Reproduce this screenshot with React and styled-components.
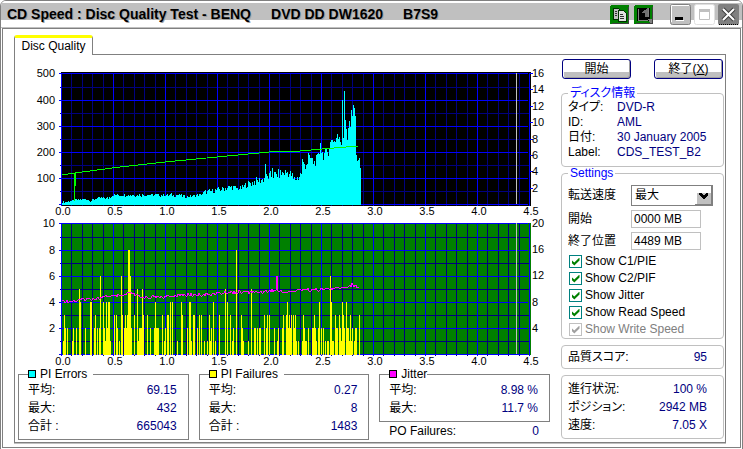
import { useState } from "react";
import styled, { createGlobalStyle } from "styled-components";

const GlobalStyle = createGlobalStyle`
  * {
    box-sizing: border-box;
  }
  body {
    margin: 0;
    background: #fff;
    color: #000;
    font: 12px/15px "Liberation Sans", "Noto Sans CJK JP", sans-serif;
    font-feature-settings: "palt";
  }
  button, input, select {
    font: inherit;
    color: inherit;
  }
`;

const Window = styled.div`
  display: flex;
  flex-direction: column;
  min-height: 100vh;
  border: 1px solid #808080;
  border-radius: 6px 6px 0 0;
  overflow: hidden;
`;

const TitleBar = styled.header`
  display: flex;
  align-items: center;
  height: 27px;
  padding: 0 3px 0 6px;
  background: linear-gradient(
    #fff 2px,
    #c0c0c0 2px 19px,
    #fff 19px 26px,
    #c0c0c0 26px
  );
`;

const Title = styled.h1`
  display: flex;
  flex: 1;
  gap: 20px;
  margin: 0;
  font-size: 14px;
  font-weight: bold;
  text-shadow: 1px 1px 0 #a0a0a0;
  white-space: nowrap;
`;

const TitleButtons = styled.div`
  display: flex;
  align-items: center;
  gap: 3px;
  margin-left: ${(props) => (props.$far ? "16px" : 0)};
`;

const IconButton = styled.button`
  width: 21px;
  height: 21px;
  padding: 0;
  border: none;
  background: none;

  svg {
    display: block;
  }
`;

const Body = styled.main`
  display: flex;
  flex-direction: column;
  flex: 1;
  margin: 0 1px 1px;
  padding: 6px 14px 4px 11px;
  border: 1px solid #808080;
`;

const Tab = styled.button`
  align-self: flex-start;
  width: 79px;
  height: 20px;
  margin-bottom: -1px;
  padding: 0;
  border: 1px solid #808080;
  border-top: 3px solid #ff0;
  border-bottom: none;
  border-radius: 3px 3px 0 0;
  background: #fff;
  z-index: 1;
`;

const Panel = styled.section`
  display: flex;
  align-items: flex-start;
  flex: 1;
  gap: 11px;
  padding: 0 1px 2px 3px;
  border: 1px solid #808080;
  box-shadow: 0 1px 0 #c0c0c0;
`;

const Charts = styled.div`
  flex: 1;
  min-width: 0;
  padding-top: 11px;
`;

const ChartSvg = styled.svg`
  display: block;
  width: 100%;
  height: auto;
  overflow: visible;
  font-size: 11px;
`;

const Stats = styled.div`
  display: grid;
  grid-template-columns: repeat(3, 1fr);
  gap: 10px;
  margin-top: 1px;
`;

const StatBox = styled.fieldset`
  min-width: 0;
  margin: 0;
  padding: 0 11px ${(props) => (props.$tight ? 4 : 2)}px 9px;
  border: 1px solid #808080;
`;

const StatLegend = styled.legend`
  display: flex;
  align-items: center;
  gap: 4px;
  padding: 0 ${(props) => (props.$tight ? 0 : "6px")} 0 0;
  line-height: 14px;
`;

const Swatch = styled.span`
  width: 8px;
  height: 8px;
  border: 1px solid #000;
  background: ${(props) => props.$color};
`;

const Rows = styled.dl`
  margin: 0;
`;

const Row = styled.div`
  display: flex;
  justify-content: space-between;
  padding: ${(props) => (props.$loose ? "0 11px 0 10px" : 0)};
  line-height: 18px;

  dd {
    margin: 0;
    color: #000080;
  }
`;

const Side = styled.aside`
  width: 163px;
  padding-top: 4px;
`;

const Actions = styled.div`
  display: flex;
  justify-content: space-between;
  margin-bottom: 8px;
  padding: 0 1px;
`;

const ActionButton = styled.button`
  width: 69px;
  height: 20px;
  padding: 0;
  border: 1px solid #000080;
  border-radius: 3px;
  background: linear-gradient(#fff 12px, #c0c0c0 12px);
  box-shadow: inset 1px 0 #fff, inset -1px -1px #a0a0a0;
  line-height: 16px;
`;

const Group = styled.fieldset`
  min-width: 0;
  margin: 0;
  padding: ${(props) => (props.$form ? "6px 6px 0" : "1px 6px 6px")};
  border: 1px solid #c0c0c0;
  border-radius: 4px;

  legend {
    padding: 0 2px;
    color: #0000ff;
    line-height: 12px;
  }
`;

const InfoRow = styled.div`
  display: grid;
  grid-template-columns: 49px 1fr;
  white-space: nowrap;

  dd {
    margin: 0;
    color: #000080;
  }
`;

const Fields = styled.div`
  display: grid;
  grid-template-columns: 63px 1fr;
  align-items: center;
  row-gap: 4px;
  margin-bottom: 3px;
`;

const SelectBox = styled.div`
  display: grid;
  width: 82px;

  > * {
    grid-area: 1 / 1;
  }
`;

const Select = styled.select`
  appearance: none;
  height: 21px;
  padding: 0 18px 0 3px;
  border: 1px solid #808080;
  border-radius: 0;
  background: #fff;
`;

const Arrow = styled.svg`
  justify-self: end;
  align-self: center;
  margin-right: 1px;
  pointer-events: none;
`;

const TextInput = styled.input`
  width: 70px;
  height: 18px;
  padding: 0 2px;
  border: 1px solid #c0c0c0;
`;

const CheckLabel = styled.label`
  display: flex;
  align-items: center;
  gap: 3px;
  height: 17px;
  padding-left: 1px;
  color: ${(props) => (props.$off ? "#808080" : "#000")};
`;

const Checkbox = styled.input`
  display: grid;
  place-content: center;
  appearance: none;
  width: 13px;
  height: 13px;
  margin: 0;
  border: 1px solid #008080;
  color: #008000;

  &:checked::before {
    content: "";
    width: 8px;
    height: 8px;
    background: currentColor;
    clip-path: polygon(0 30%, 35% 62%, 100% 0, 100% 38%, 35% 100%, 0 66%);
  }

  &:disabled {
    border-color: #c0c0c0;
    color: #a0a0a0;
  }
`;

const Summary = styled.dl`
  margin: 6px 0 0;
  padding: ${(props) => props.$pad}px 16px ${(props) => props.$pad}px 6px;
  border: 1px solid #c0c0c0;
  border-radius: 4px;
`;

// Plot area, in chart units
const LEFT = 43;
const TOP = 7;
const BOTTOM = 138;
const RIGHT = 512;

// [x, height] of the PI error curve
const PIE_PROFILE = [
  [0, 3], [9, 4], [14, 5], [24, 6], [28, 4], [36, 7], [46, 7], [50, 10],
  [60, 10], [90, 10], [118, 10], [123, 8], [138, 10], [142, 13], [155, 15],
  [168, 18], [178, 16], [185, 21], [195, 24], [201, 26], [208, 29],
  [218, 31], [225, 33], [230, 29], [231, 25], [236, 28], [239, 32],
  [240, 42], [243, 40], [248, 47], [252, 42], [256, 48], [258, 56],
  [261, 50], [266, 54], [268, 62], [270, 66], [272, 64], [275, 68], [279, 62],
];
const PIE_SPIKES = { 203: 41, 210: 37, 240: 46, 246: 52, 258: 62, 275: 71 };
// last columns, one value per pixel
const PIE_TAIL = [105, 67, 114, 85, 76, 65, 77, 84, 78, 95, 89, 100, 97, 89, 50, 44, 45, 47, 37];
const TAIL_START = 280;

// [x, y] of the jitter curve
const JITTER_PROFILE = [
  [0, 85], [12, 85], [22, 83], [40, 82], [46, 80], [60, 80], [68, 77],
  [78, 81], [100, 81], [120, 79], [150, 78], [170, 76], [200, 76],
  [214, 74], [220, 76], [228, 76], [240, 73], [255, 74], [262, 73],
  [280, 72], [290, 69], [297, 71],
];
const JITTER_SPIKE = 215;

const PIF = [
  [1, 1], [2, 3], [3, 2], [5, 2], [10, 1], [11, 2], [14, 2], [17, 5], [18, 4],
  [23, 2], [28, 4], [29, 4], [32, 2], [33, 3], [35, 2], [37, 2], [38, 6],
  [41, 4], [42, 2], [43, 1], [44, 4], [45, 2], [46, 4], [47, 4], [48, 1],
  [52, 3], [54, 3], [55, 2], [57, 1], [59, 6], [60, 3], [62, 2], [63, 3],
  [64, 2], [65, 3], [66, 8], [67, 8], [68, 6], [69, 2], [72, 3], [75, 5],
  [76, 1], [77, 2], [78, 2], [79, 2], [80, 5], [81, 3], [85, 3], [88, 2],
  [92, 2], [93, 4], [94, 2], [95, 2], [96, 2], [100, 3], [102, 1], [103, 2],
  [105, 3], [106, 3], [108, 4], [110, 4], [115, 1], [119, 4], [120, 3],
  [125, 2], [127, 4], [128, 4], [129, 1], [131, 3], [132, 3], [135, 2],
  [137, 3], [139, 3], [142, 1], [145, 1], [147, 3], [148, 1], [149, 2],
  [151, 4], [153, 1], [157, 3], [163, 5], [165, 4], [168, 3], [170, 1],
  [171, 2], [174, 8], [179, 3], [180, 2], [181, 1], [186, 1], [189, 5],
  [192, 2], [193, 2], [195, 2], [197, 2], [198, 2], [202, 3], [204, 2],
  [205, 3], [207, 3], [212, 2], [215, 1], [216, 2], [220, 2], [221, 3],
  [224, 3], [225, 4], [226, 2], [227, 3], [228, 2], [229, 3], [231, 3],
  [232, 2], [233, 3], [234, 1], [236, 1], [240, 1], [241, 3], [242, 2],
  [243, 1], [244, 1], [246, 2], [250, 2], [251, 2], [252, 3], [253, 2],
  [254, 1], [256, 2], [257, 4], [259, 2], [261, 2], [263, 1], [265, 1],
  [266, 1], [268, 6], [269, 4], [270, 1], [271, 1], [273, 3], [274, 2],
  [275, 2], [277, 3], [278, 2], [279, 1], [280, 4], [281, 3], [282, 2],
  [284, 4], [285, 2], [286, 2], [287, 1], [288, 3], [289, 1], [290, 2],
  [292, 1], [293, 2], [294, 2], [297, 3],
];

const READ_SPEED = "44,109 57,107 102,101 147,96 199,91 251,86 282,85 304,83 340,80";

const noise = (i) => {
  const n = Math.sin(i * 12.9898) * 43758.5453;
  return (n - Math.floor(n)) * 2 - 1;
};

const valueAt = (profile, x) => {
  const next = profile.findIndex((point) => point[0] >= x);
  if (next === 0) return profile[0][1];
  if (next < 0) return profile[profile.length - 1][1];
  const [x0, y0] = profile[next - 1];
  const [x1, y1] = profile[next];
  return y0 + ((y1 - y0) * (x - x0)) / (x1 - x0);
};

const errorBars = Array.from({ length: TAIL_START + PIE_TAIL.length }, (_, x) => {
  if (x >= TAIL_START) return PIE_TAIL[x - TAIL_START];
  if (PIE_SPIKES[x]) return PIE_SPIKES[x];
  const base = valueAt(PIE_PROFILE, x);
  return Math.round(base + noise(x) * Math.min(5, Math.max(1, base * 0.17)));
});

const bars = (list) =>
  list.map(([x, h]) => `M${LEFT + 1 + x} ${BOTTOM + 1}v${-h}h1v${h}z`).join("");

const errorPath = bars(errorBars.map((h, x) => [x, h]));
const failurePath = bars(PIF.map(([x, v]) => [x, v * 13 + 1]));
const jitterLine = Array.from({ length: 298 }, (_, x) => {
  const y = x === JITTER_SPIKE ? 60 : Math.round(valueAt(JITTER_PROFILE, x) + noise(x + 7) * 1.7);
  return `${LEFT + 1 + x},${y}`;
}).join(" ");

function Chart({ label, background, minor, leftLabels, rightLabels, rightTicks, children }) {
  const vertical = Array.from({ length: 46 }, (_, i) => i);
  const horizontal = Array.from({ length: 11 }, (_, i) => i);
  const lineY = (i) => (i === 10 ? TOP : BOTTOM - i * 13);
  const span = BOTTOM - TOP;

  return (
    <ChartSvg viewBox="0 0 532 150" role="img" aria-label={label}>
      <g shapeRendering="crispEdges">
        <rect
          x={LEFT}
          y={background === "#000" ? TOP - 1 : TOP}
          width={RIGHT - LEFT + 1}
          height={background === "#000" ? span + 3 : span + 1}
          fill={background}
        />
        {[false, true].map((major) => (
          <g key={String(major)} fill={major ? "#0000ff" : minor}>
            {vertical
              .filter((i) => (i % 5 === 0) === major)
              .map((i) => (
                <rect key={i} x={Math.floor(LEFT + 0.5 + i * 10.4)} y={TOP} width="1" height={span + 2} />
              ))}
            {horizontal
              .filter((i) => (i % 2 === 0) === major)
              .map((i) => (
                <rect key={i} x={LEFT - (major ? 2 : 1)} y={lineY(i)} width={RIGHT - LEFT} height="1" />
              ))}
          </g>
        ))}
        {rightTicks &&
          rightLabels.map((_, i) => (
            <rect key={i} x={RIGHT} y={Math.round(TOP + (i * span) / 8)} width="3" height="1" fill="#0000ff" />
          ))}
        {children}
        <rect x="498" y={TOP} width="1" height={span} fill="#c0c0c0" />
      </g>
      {leftLabels.map((text, i) => (
        <text key={text} x="37" y={lineY(10 - i * 2) + 4} textAnchor="end">
          {text}
        </text>
      ))}
      {rightLabels.map((text, i) => (
        <text key={text} x="514" y={Math.round(TOP + (i * span) / (rightTicks ? 8 : 5)) + 4}>
          {text}
        </text>
      ))}
      {vertical
        .filter((i) => i % 5 === 0)
        .map((i) => (
          <text key={i} x={LEFT + 2 + Math.round(i * 10.4)} y="149" textAnchor="middle">
            {(i / 10).toFixed(1)}
          </text>
        ))}
    </ChartSvg>
  );
}

function Stat({ color, title, tight, rows }) {
  return (
    <StatBox $tight={tight}>
      <StatLegend $tight={tight}>
        <Swatch $color={color} />
        {title}
      </StatLegend>
      <Rows>
        {rows.map(([name, value]) => (
          <Row key={name}>
            <dt>{name}</dt>
            <dd>{value}</dd>
          </Row>
        ))}
      </Rows>
    </StatBox>
  );
}

const GreenFrame = () => (
  <>
    <rect x="1" y="1" width="19" height="19" rx="2" fill="#008000" />
    <path d="M3 19.5H19.5V3" fill="none" stroke="#404040" />
  </>
);

const CopyIcon = () => (
  <svg width="21" height="21" shapeRendering="crispEdges">
    <GreenFrame />
    <path d="M4 4h5l2 2v9H4z" fill="#c0c0c0" stroke="#003000" />
    <path d="M9 6h5l3 3v8H9z" fill="#e0e0e0" stroke="#003000" />
    <path d="M6 7h2M6 9h2M6 11h2M11 10h3M11 12h4M11 14h4" stroke="#303030" />
  </svg>
);

const SaveIcon = () => (
  <svg width="21" height="21" shapeRendering="crispEdges">
    <GreenFrame />
    <rect x="4" y="4" width="13" height="13" fill="#000" />
    <path d="M9 8l6-4v9h-3v-4H8z" fill="#707070" />
    <path d="M15 4v9M5 5v11h10" fill="none" stroke="#808080" />
    <path d="M15 15h4v4h-2z" fill="#808080" />
  </svg>
);

const MinimizeIcon = () => (
  <svg width="21" height="21">
    <rect x="0.5" y="0.5" width="20" height="20" rx="2" fill="#c0c0c0" stroke="#808080" />
    <path d="M1.5 18V1.5H19" fill="none" stroke="#fff" />
    <path d="M5 14.5h8" stroke="#000" strokeWidth="3" />
    <path d="M6 16.5h8" stroke="#fff" />
  </svg>
);

const MaximizeIcon = () => (
  <svg width="21" height="21">
    <rect x="0.5" y="0.5" width="20" height="20" rx="2" fill="#fff" stroke="#e0e0e0" />
    <path d="M5.5 6.5h10v9h-10z" fill="#fff" stroke="#c0c0c0" />
    <path d="M5 6.5h11" stroke="#c0c0c0" strokeWidth="3" />
  </svg>
);

const CloseIcon = () => (
  <svg width="21" height="21">
    <rect width="21" height="21" rx="2" fill="#808080" />
    <path d="M1 20.5h19" stroke="#000" strokeDasharray="1 1" />
    <path d="M5 5l11 11M16 5L5 16" stroke="#404040" strokeWidth="4" />
    <path d="M5 5l11 11M16 5L5 16" stroke="#fff" strokeWidth="2" />
  </svg>
);

const CHECKS = ["Show C1/PIE", "Show C2/PIF", "Show Jitter", "Show Read Speed", "Show Write Speed"];

function App() {
  const [checked, setChecked] = useState(CHECKS.map(() => true));
  const [start, setStart] = useState("0000 MB");
  const [end, setEnd] = useState("4489 MB");

  const toggle = (index) => {
    setChecked(checked.map((value, i) => (i === index ? !value : value)));
  };

  return (
    <>
      <GlobalStyle />
      <Window>
        <TitleBar>
          <Title>
            <span>CD Speed : Disc Quality Test - BENQ</span>
            <span>DVD DD DW1620</span>
            <span>B7S9</span>
          </Title>
          <TitleButtons>
            <IconButton aria-label="Copy"><CopyIcon /></IconButton>
            <IconButton aria-label="Save"><SaveIcon /></IconButton>
          </TitleButtons>
          <TitleButtons $far>
            <IconButton aria-label="Minimize"><MinimizeIcon /></IconButton>
            <IconButton aria-label="Maximize"><MaximizeIcon /></IconButton>
            <IconButton aria-label="Close"><CloseIcon /></IconButton>
          </TitleButtons>
        </TitleBar>
        <Body>
          <Tab>Disc Quality</Tab>
          <Panel>
            <Charts>
              <Chart
                label="PI Errors"
                background="#000"
                minor="#000080"
                leftLabels={["500", "400", "300", "200", "100"]}
                rightLabels={["16", "14", "12", "10", "8", "6", "4", "2"]}
                rightTicks
              >
                {checked[0] && <path d={errorPath} fill="#00ffff" />}
                {checked[3] && (
                  <g fill="none" stroke="#00ff00">
                    <polyline points={READ_SPEED} />
                    <path d="M56.5 107v28M57.5 107v13" />
                  </g>
                )}
              </Chart>
              <Chart
                label="PI Failures"
                background="#008000"
                minor="#000080"
                leftLabels={["10", "8", "6", "4", "2"]}
                rightLabels={["20", "16", "12", "8", "4"]}
              >
                {checked[1] && <path d={failurePath} fill="#ffff00" />}
                {checked[2] && <polyline points={jitterLine} fill="none" stroke="#ff00ff" />}
              </Chart>
              <Stats>
                <Stat
                  color="#00ffff"
                  title="PI Errors"
                  rows={[["平均:", "69.15"], ["最大:", "432"], ["合計 :", "665043"]]}
                />
                <Stat
                  color="#ffff00"
                  title="PI Failures"
                  rows={[["平均:", "0.27"], ["最大:", "8"], ["合計 :", "1483"]]}
                />
                <div>
                  <Stat
                    color="#ff00ff"
                    title="Jitter"
                    tight
                    rows={[["平均:", "8.98 %"], ["最大:", "11.7 %"]]}
                  />
                  <Rows>
                    <Row $loose>
                      <dt>PO Failures:</dt>
                      <dd>0</dd>
                    </Row>
                  </Rows>
                </div>
              </Stats>
            </Charts>
            <Side>
              <Actions>
                <ActionButton>開始</ActionButton>
                <ActionButton>終了(<u>X</u>)</ActionButton>
              </Actions>
              <Group>
                <legend>ディスク情報</legend>
                <Rows>
                  <InfoRow><dt>タイプ:</dt><dd>DVD-R</dd></InfoRow>
                  <InfoRow><dt>ID:</dt><dd>AML</dd></InfoRow>
                  <InfoRow><dt>日付:</dt><dd>30 January 2005</dd></InfoRow>
                  <InfoRow><dt>Label:</dt><dd>CDS_TEST_B2</dd></InfoRow>
                </Rows>
              </Group>
              <Group $form>
                <legend>Settings</legend>
                <Fields>
                  <label htmlFor="speed">転送速度</label>
                  <SelectBox>
                    <Select id="speed">
                      <option>最大</option>
                    </Select>
                    <Arrow width="17" height="19" shapeRendering="crispEdges">
                      <rect width="17" height="19" fill="#808080" />
                      <rect width="16" height="18" fill="#fff" />
                      <rect x="2" y="7" width="14" height="11" fill="#c0c0c0" />
                      <path d="M4 7h2l2.5 2.5L11 7h2v2l-4.5 4.5L4 9z" fill="#000" />
                    </Arrow>
                  </SelectBox>
                  <label htmlFor="start">開始</label>
                  <TextInput id="start" value={start} onChange={(e) => setStart(e.target.value)} />
                  <label htmlFor="end">終了位置</label>
                  <TextInput id="end" value={end} onChange={(e) => setEnd(e.target.value)} />
                </Fields>
                {CHECKS.map((name, i) => (
                  <CheckLabel key={name} $off={i === 4}>
                    <Checkbox
                      type="checkbox"
                      checked={checked[i]}
                      disabled={i === 4}
                      onChange={() => toggle(i)}
                    />
                    {name}
                  </CheckLabel>
                ))}
              </Group>
              <Summary $pad={2}>
                <Row><dt>品質スコア:</dt><dd>95</dd></Row>
              </Summary>
              <Summary $pad={4}>
                <Row><dt>進行状況:</dt><dd>100 %</dd></Row>
                <Row><dt>ポジション:</dt><dd>2942 MB</dd></Row>
                <Row><dt>速度:</dt><dd>7.05 X</dd></Row>
              </Summary>
            </Side>
          </Panel>
        </Body>
      </Window>
    </>
  );
}

export default App;
